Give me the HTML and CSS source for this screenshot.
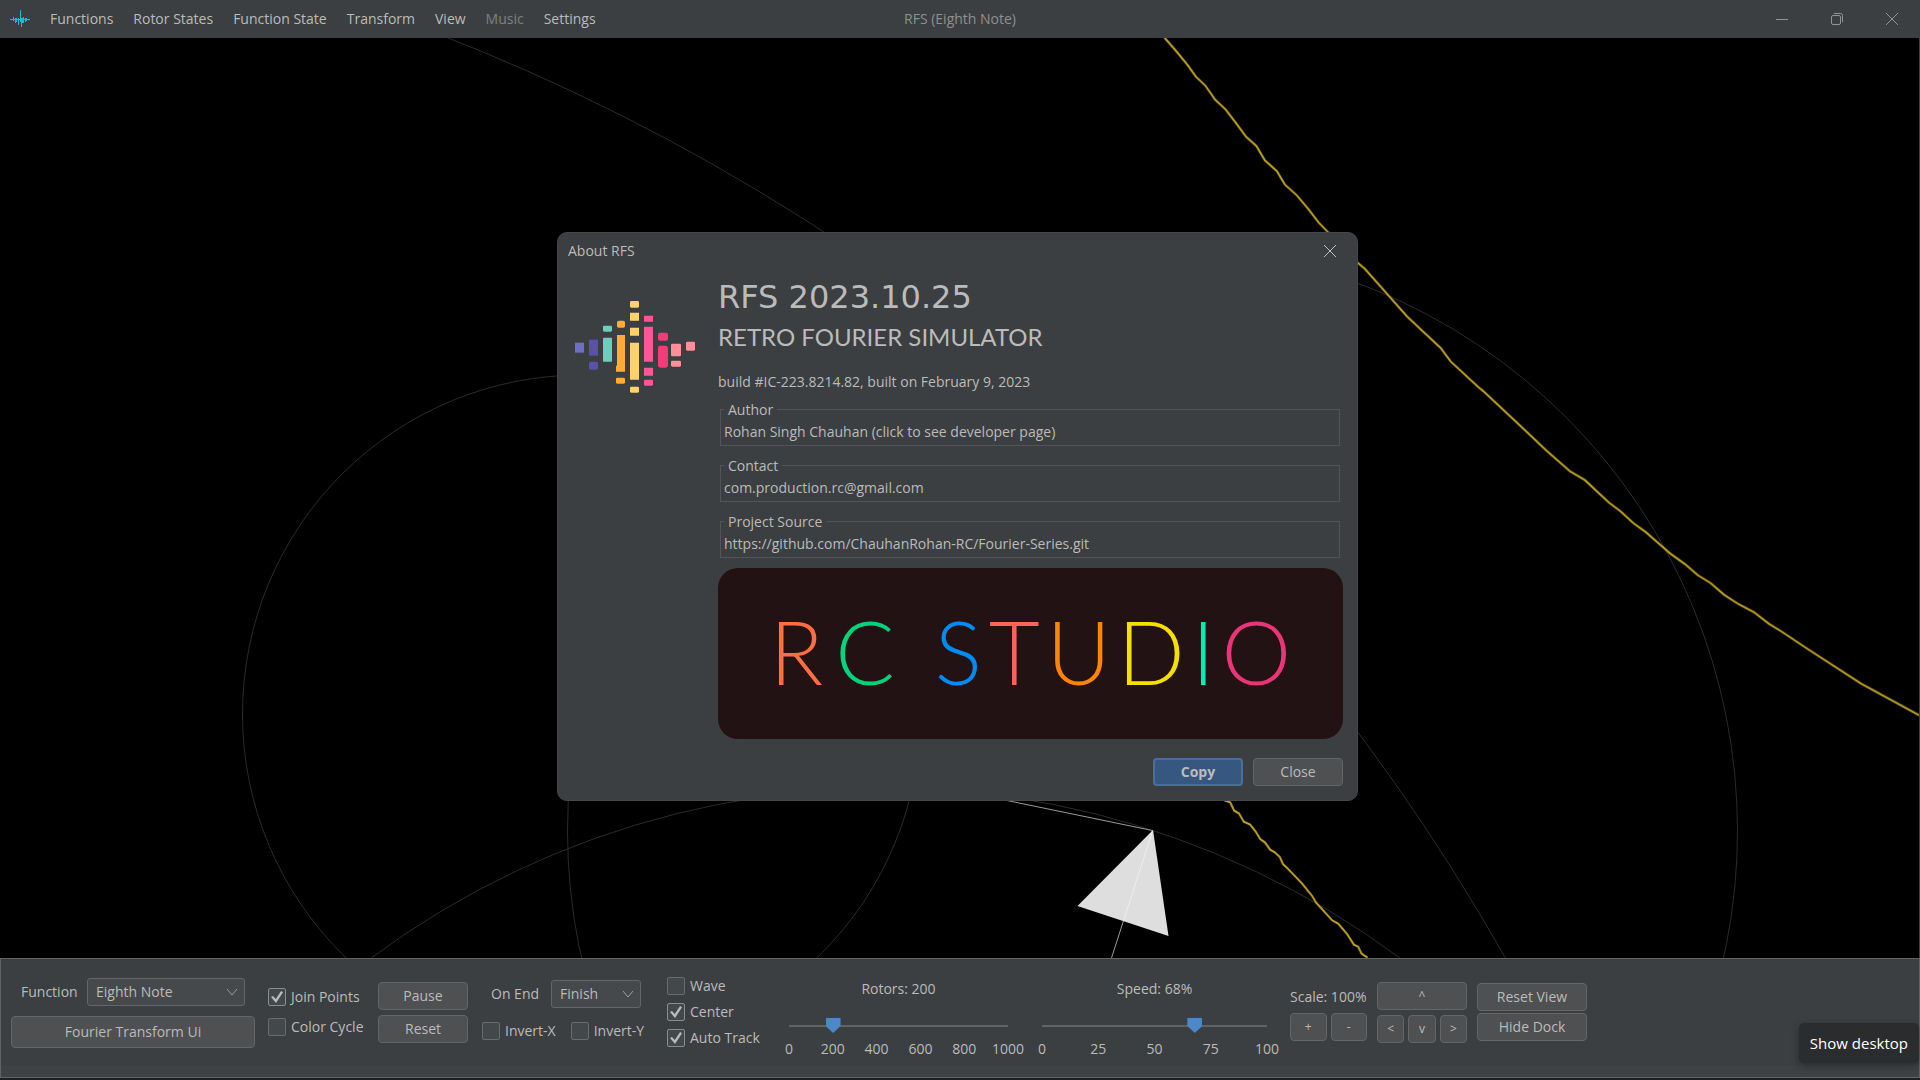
FILE: index.html
```html
<!DOCTYPE html>
<html lang="en">
<head>
<meta charset="utf-8">
<title>RFS (Eighth Note)</title>
<link rel="stylesheet" href="styles.css">
</head>
<body>
<header class="titlebar">
  <nav class="menu">
    <svg class="app-icon" width="20" height="20" viewBox="0 0 20 20" aria-hidden="true"><path d="M0 10.500H20M3.500 8V12M5.500 9V14M6.500 9V13M8.500 9V16M10.500 1V13M11.500 9V18M12.500 9V14M13.500 8V14M15.500 9V13M16.500 9V12"/></svg>
    <button type="button">Functions</button>
    <button type="button">Rotor States</button>
    <button type="button">Function State</button>
    <button type="button">Transform</button>
    <button type="button">View</button>
    <button type="button" disabled>Music</button>
    <button type="button">Settings</button>
  </nav>
  <h1 class="window-title">RFS (Eighth Note)</h1>
  <div class="window-controls">
    <button type="button" aria-label="Minimize"><svg width="14" height="14" viewBox="0 0 14 14"><path d="M1 7.500H13"/></svg></button>
    <button type="button" aria-label="Restore"><svg width="14" height="14" viewBox="0 0 14 14"><rect x="1.500" y="3.500" width="9" height="9" rx="1.500"/><path d="M4 1.500H10.500Q12.500 1.500 12.500 3.500V10"/></svg></button>
    <button type="button" aria-label="Close window"><svg width="14" height="14" viewBox="0 0 14 14"><path d="M1 1L13 13M13 1L1 13"/></svg></button>
  </div>
</header>

<main class="stage">
  <svg class="plot" viewBox="0 38 1920 920" preserveAspectRatio="xMidYMid slice" aria-hidden="true">
    <g class="orbit">
      <circle cx="582" cy="714" r="339"/>
      <circle cx="1153" cy="831" r="585"/>
      <circle cx="-323" cy="1992" r="2101"/>
      <circle cx="886" cy="1651" r="863"/>
    </g>
    <path class="rotor" d="M1005 800L1153 830.500L1112 958"/>
    <path class="arrow-head" d="M1153.500 830L1078 906L1169 936Z"/>
    <path class="arrow-core" d="M1153 831L1124 921"/>
    <g class="trace">
      <polyline transform="translate(1140 30) scale(.4975 .4464)" points="50,17 72,45 97,79 113,104 132,124 152,156 173,178 195,210 214,239 235,260 252,292 276,316 292,346 316,370 340,402 360,431 380,454 437,520 453,535 500,594 538,642 605,712 625,742 680,799 690,808 765,886 818,942 866,989 895,1008 943,1058 967,1078 992,1104 1018,1125 1066,1172 1096,1196 1122,1221 1148,1239 1175,1265 1204,1286 1235,1304 1265,1330 1290,1347 1345,1388 1450,1464 1567,1535"/>
      <polyline transform="translate(1000 790) scale(.3333)" points="674,31 692,37 704,62 718,70 733,95 752,104 768,124 782,147 796,157 812,179 826,187 841,201 850,222 862,233 908,281 938,318 950,338 998,391 1016,401 1043,432 1063,464 1076,470 1086,491 1104,503"/>
    </g>
  </svg>

  <section class="dialog" role="dialog" aria-labelledby="about-title">
    <div class="dialog-bar">
      <h2 id="about-title">About RFS</h2>
      <button type="button" aria-label="Close dialog"><svg width="14" height="14" viewBox="0 0 14 14"><path d="M1 1L13 13M13 1L1 13"/></svg></button>
    </div>
    <div class="dialog-body">
      <svg class="logo" width="120" height="92" viewBox="75 229 360 276" aria-hidden="true">
        <path fill="#6e6fc4" d="M75 354h27v30h-27z"/>
        <g fill="#5853a8"><path d="M117 345h27v48h-27z"/><rect x="117" y="411" width="27" height="24" rx="5"/></g>
        <g fill="#6ccfbd"><rect x="159" y="303" width="27" height="18" rx="4"/><rect x="159" y="339" width="27" height="72" rx="2"/></g>
        <g fill="#ffab35"><rect x="201" y="288" width="24" height="21" rx="5"/><path d="M201 331h24v110h-27v-18h3z"/><rect x="198" y="459" width="27" height="18" rx="4"/></g>
        <g fill="#ffd26a"><rect x="240" y="229" width="27" height="20" rx="4"/><path d="M240 264h27v24h-27zM240 309h27v24h-27zM240 354h27v111h-27z"/><rect x="240" y="486" width="27" height="18" rx="4"/></g>
        <g fill="#ff5599"><path d="M282 273h27v18h-27zM282 306h27v105h-27zM282 429h27v24h-27z"/><rect x="282" y="465" width="27" height="18" rx="4"/></g>
        <g fill="#f73a78"><rect x="324" y="324" width="30" height="24" rx="6"/><rect x="324" y="363" width="30" height="66" rx="7"/></g>
        <g fill="#ff8e99"><rect x="363" y="357" width="30" height="38" rx="4"/><rect x="363" y="408" width="30" height="18" rx="4"/><rect x="408" y="351" width="27" height="27" rx="4"/></g>
      </svg>
      <div class="about">
        <p class="product">RFS 2023.10.25</p>
        <p class="tagline">RETRO FOURIER SIMULATOR</p>
        <p class="build">build #IC-223.8214.82, built on February 9, 2023</p>
        <div class="facts">
          <fieldset><legend>Author</legend><a href="#author">Rohan Singh Chauhan (click to see developer page)</a></fieldset>
          <fieldset><legend>Contact</legend><a href="#contact">com.production.rc@gmail.com</a></fieldset>
          <fieldset><legend>Project Source</legend><a href="#source">https://github.com/ChauhanRohan-RC/Fourier-Series.git</a></fieldset>
        </div>
        <div class="banner">
          <span class="word initials"><span class="c-coral">R</span><span class="c-green">C</span></span>
          <span class="word"><span class="c-blue">S</span><span class="c-red">T</span><span class="c-orange">U</span><span class="c-yellow">D</span><span class="c-teal">I</span><span class="c-pink">O</span></span>
        </div>
        <div class="dialog-actions">
          <button class="btn primary" type="button">Copy</button>
          <button class="btn" type="button">Close</button>
        </div>
      </div>
    </div>
  </section>
</main>

<footer class="dock">
  <div class="group function-group">
    <div class="field"><label for="fn">Function</label>
      <span class="select"><select id="fn"><option>Eighth Note</option></select><svg width="12" height="8" viewBox="0 0 12 8"><path d="M1 1L6 7L11 1"/></svg></span></div>
    <button class="btn tall" type="button">Fourier Transform Ui</button>
  </div>
  <div class="group check-group">
    <label class="check"><input type="checkbox" checked>Join Points</label>
    <label class="check"><input type="checkbox">Color Cycle</label>
  </div>
  <div class="group play-group">
    <button class="btn" type="button">Pause</button>
    <button class="btn" type="button">Reset</button>
  </div>
  <div class="group end-group">
    <div class="field"><label for="end">On End</label>
      <span class="select"><select id="end"><option>Finish</option></select><svg width="12" height="8" viewBox="0 0 12 8"><path d="M1 1L6 7L11 1"/></svg></span></div>
    <div class="pair">
      <label class="check"><input type="checkbox">Invert-X</label>
      <label class="check"><input type="checkbox">Invert-Y</label>
    </div>
  </div>
  <div class="group track-group">
    <label class="check"><input type="checkbox">Wave</label>
    <label class="check"><input type="checkbox" checked>Center</label>
    <label class="check"><input type="checkbox" checked>Auto Track</label>
  </div>
  <div class="slider rotors">
    <label for="rotors">Rotors: 200</label>
    <input id="rotors" type="range" min="0" max="1000" value="200">
    <div class="ticks"><span>0</span><span>200</span><span>400</span><span>600</span><span>800</span><span>1000</span></div>
  </div>
  <div class="slider speed">
    <label for="speed">Speed: 68%</label>
    <input id="speed" type="range" min="0" max="100" value="68">
    <div class="ticks"><span>0</span><span>25</span><span>50</span><span>75</span><span>100</span></div>
  </div>
  <div class="view-tools">
    <div class="scale">
      <span>Scale: 100%</span>
      <div class="keys"><button class="btn small" type="button">+</button><button class="btn small" type="button">-</button></div>
    </div>
    <div class="group pan">
      <button class="btn small" type="button">^</button>
      <div class="keys"><button class="btn small" type="button">&lt;</button><button class="btn small" type="button">v</button><button class="btn small" type="button">&gt;</button></div>
    </div>
    <div class="group view-buttons">
      <button class="btn" type="button">Reset View</button>
      <button class="btn" type="button">Hide Dock</button>
    </div>
  </div>
  <div class="tooltip" role="tooltip">Show desktop</div>
</footer>
</body>
</html>
```
FILE: styles.css
```css
* { box-sizing: border-box; }
body {
  margin: 0;
  min-height: 100vh;
  display: flex;
  flex-direction: column;
  background: #1e1f20;
  color: #bbbbbb;
  font: 14px/20px "Open Sans", "Noto Sans", sans-serif;
}
button, select, input { font: inherit; color: inherit; }
h1, h2, p { margin: 0; font-size: 14px; font-weight: 400; }
svg { display: block; fill: none; }

/* Title bar */
.titlebar {
  display: grid;
  grid-template-columns: 1fr auto 1fr;
  align-items: center;
  height: 38px;
  background: #3c3f41;
}
.menu { display: flex; align-items: center; gap: 20px; padding-left: 10px; }
.menu button, .window-controls button, .dialog-bar button {
  padding: 0;
  border: 0;
  background: none;
}
.menu button:disabled { color: #7f8182; }
.app-icon { stroke: #1fb8d0; }
.window-title { color: #8e9091; }
.window-controls { display: flex; justify-content: flex-end; padding-right: 1px; }
.window-controls button { display: grid; place-items: center; width: 55px; height: 36px; }
.window-controls svg { stroke: #919394; }

/* Plot */
.stage {
  position: relative;
  flex: 1;
  background: #000;
  border-right: 1px solid #3c3f41;
  overflow: hidden;
}
.plot { position: absolute; inset: 0; width: 100%; height: 100%; }
.orbit { stroke: #2b2b2b; }
.rotor { stroke: #9a9a9a; }
.arrow-head { fill: #dedede; }
.arrow-core { stroke: #eeeeee; }
.trace { stroke: #e2c22b; stroke-width: 2; opacity: .85; }
.trace polyline { vector-effect: non-scaling-stroke; }

/* About dialog */
.dialog {
  position: absolute;
  top: 194px;
  left: 0;
  right: 4px;
  width: 801px;
  margin: 0 auto;
  padding-bottom: 14px;
  background: #3c3f41;
  border: 1px solid #45484a;
  border-radius: 10px;
}
.dialog-bar { display: flex; align-items: center; justify-content: space-between; height: 35px; padding: 0 20px 0 10px; }
.dialog-bar svg { stroke: #c0c0c0; }
.dialog-body { display: grid; grid-template-columns: 143px 1fr; padding: 7px 14px 0 17px; }
.logo { margin-top: 26px; }
.product { font: 32px/44px "DejaVu Sans", sans-serif; }
.tagline { font: 24px/36px Lato, sans-serif; }
.build { margin-top: 15px; line-height: 24px; }
.facts { display: grid; gap: 10px; margin: 6px 3px 10px 2px; }
.facts fieldset { margin: 0; padding: 0 3px; border: 1px solid #525557; min-width: 0; }
.facts legend { margin-left: 0; padding: 0 4px; line-height: 19px; }
.facts a { display: block; color: inherit; text-decoration: none; line-height: 26px; }
.banner {
  display: flex;
  align-items: center;
  justify-content: center;
  gap: 40px;
  height: 171px;
  padding-bottom: 6px;
  background: #231213;
  border-radius: 20px;
  font: 300 88px/88px Lato, sans-serif;
}
.word { display: flex; gap: 7px; }
.c-coral { color: #ff6e42; }
.c-green { color: #00d47c; }
.c-blue { color: #008cf5; }
.c-red { color: #fa6358; }
.c-orange { color: #ff8400; }
.c-yellow { color: #f4e100; }
.c-teal { color: #00f0b4; }
.c-pink { color: #ea3578; }
.initials { gap: 12px; }
.dialog-actions { display: flex; justify-content: flex-end; gap: 10px; margin-top: 19px; }
.dialog-actions .btn { width: 90px; }

/* Controls */
.btn {
  height: 28px;
  padding: 0;
  border: 1px solid #636567;
  border-radius: 4px;
  background: #4e5052;
}
.btn.primary { background: #365880; border: 2px solid #4a6f9c; font-weight: 700; }
.btn.tall { height: 32px; }
.btn.small { font-size: 12px; }
.select { display: grid; align-items: center; }
.select > * { grid-area: 1 / 1; }
.select select {
  appearance: none;
  width: 100%;
  height: 28px;
  padding: 0 8px;
  border: 1px solid #646769;
  border-radius: 3px;
  background: #45494b;
}
.select svg { justify-self: end; margin-right: 7px; stroke: #9a9da0; pointer-events: none; }
.check { display: flex; align-items: center; gap: 5px; height: 18px; white-space: nowrap; }
.check input {
  appearance: none;
  display: grid;
  place-items: center;
  flex: none;
  width: 18px;
  height: 18px;
  margin: 0;
  border: 1px solid #6b6b6b;
  border-radius: 2px;
  background: #43494a;
}
.check input:checked { border-color: #8a8c8d; }
.check input:checked::before {
  content: "";
  width: 12px;
  height: 12px;
  background: #bbbbbb;
  clip-path: polygon(0 50%, 16% 42%, 40% 66%, 84% 0, 100% 10%, 42% 100%);
}

/* Dock */
.dock {
  position: relative;
  display: flex;
  align-items: center;
  gap: 12px;
  height: 120px;
  margin-bottom: 2px;
  padding: 0 10px 12px;
  background: linear-gradient(#3c3f41 106px, #3f4244 106px);
  border: 1px solid #616365;
  white-space: nowrap;
}
.group { display: grid; gap: 5px; }
.field { display: flex; align-items: center; justify-content: space-between; }
.function-group { width: 244px; gap: 10px; padding-top: 2px; }
.function-group .field { padding: 0 10px 0 10px; }
.function-group .select { width: 158px; }
.check-group { width: 99px; gap: 12px; padding-left: 1px; }
.play-group { width: 90px; }
.end-group { width: 175px; padding: 0 6px 4px 2px; gap: 14px; }
.end-group .field { padding: 0 8px 0 9px; }
.end-group .select { width: 90px; }
.pair { display: flex; gap: 15px; }
.track-group { width: 95px; gap: 8px; }
.slider { display: grid; justify-items: stretch; padding-top: 13px; }
.slider label { text-align: center; line-height: 20px; margin-bottom: 19px; }
.rotors { width: 249px; padding-inline: 15px; }
.speed { width: 239px; padding-inline: 7px; }
.slider input {
  appearance: none;
  width: calc(100% + 14px);
  height: 16px;
  margin: 0 -7px;
  background: linear-gradient(#616466, #616466) center / calc(100% - 14px) 2px no-repeat;
}
.slider input::-webkit-slider-thumb {
  appearance: none;
  width: 15px;
  height: 15px;
  background: #4a88c7;
  clip-path: polygon(0 0, 100% 0, 100% 53%, 50% 100%, 0 53%);
}
.ticks { display: flex; justify-content: space-between; margin-top: 5px; }
.ticks span { display: flex; justify-content: center; width: 0; }
.view-tools { display: flex; align-items: center; gap: 10px; padding-left: 4px; }
.scale { display: grid; gap: 6px; width: 77px; padding-top: 4px; }
.keys { display: grid; grid-auto-flow: column; grid-auto-columns: 1fr; gap: 4px; }
.pan { width: 90px; }
.view-buttons { width: 110px; gap: 2px; }
.tooltip {
  position: absolute;
  right: 0;
  bottom: 14px;
  padding: 10px 11px;
  border-radius: 5px;
  background: #2b2c2d;
  color: #ffffff;
  font-size: 15px;
  box-shadow: 0 3px 8px rgba(0, 0, 0, .3);
}
```
